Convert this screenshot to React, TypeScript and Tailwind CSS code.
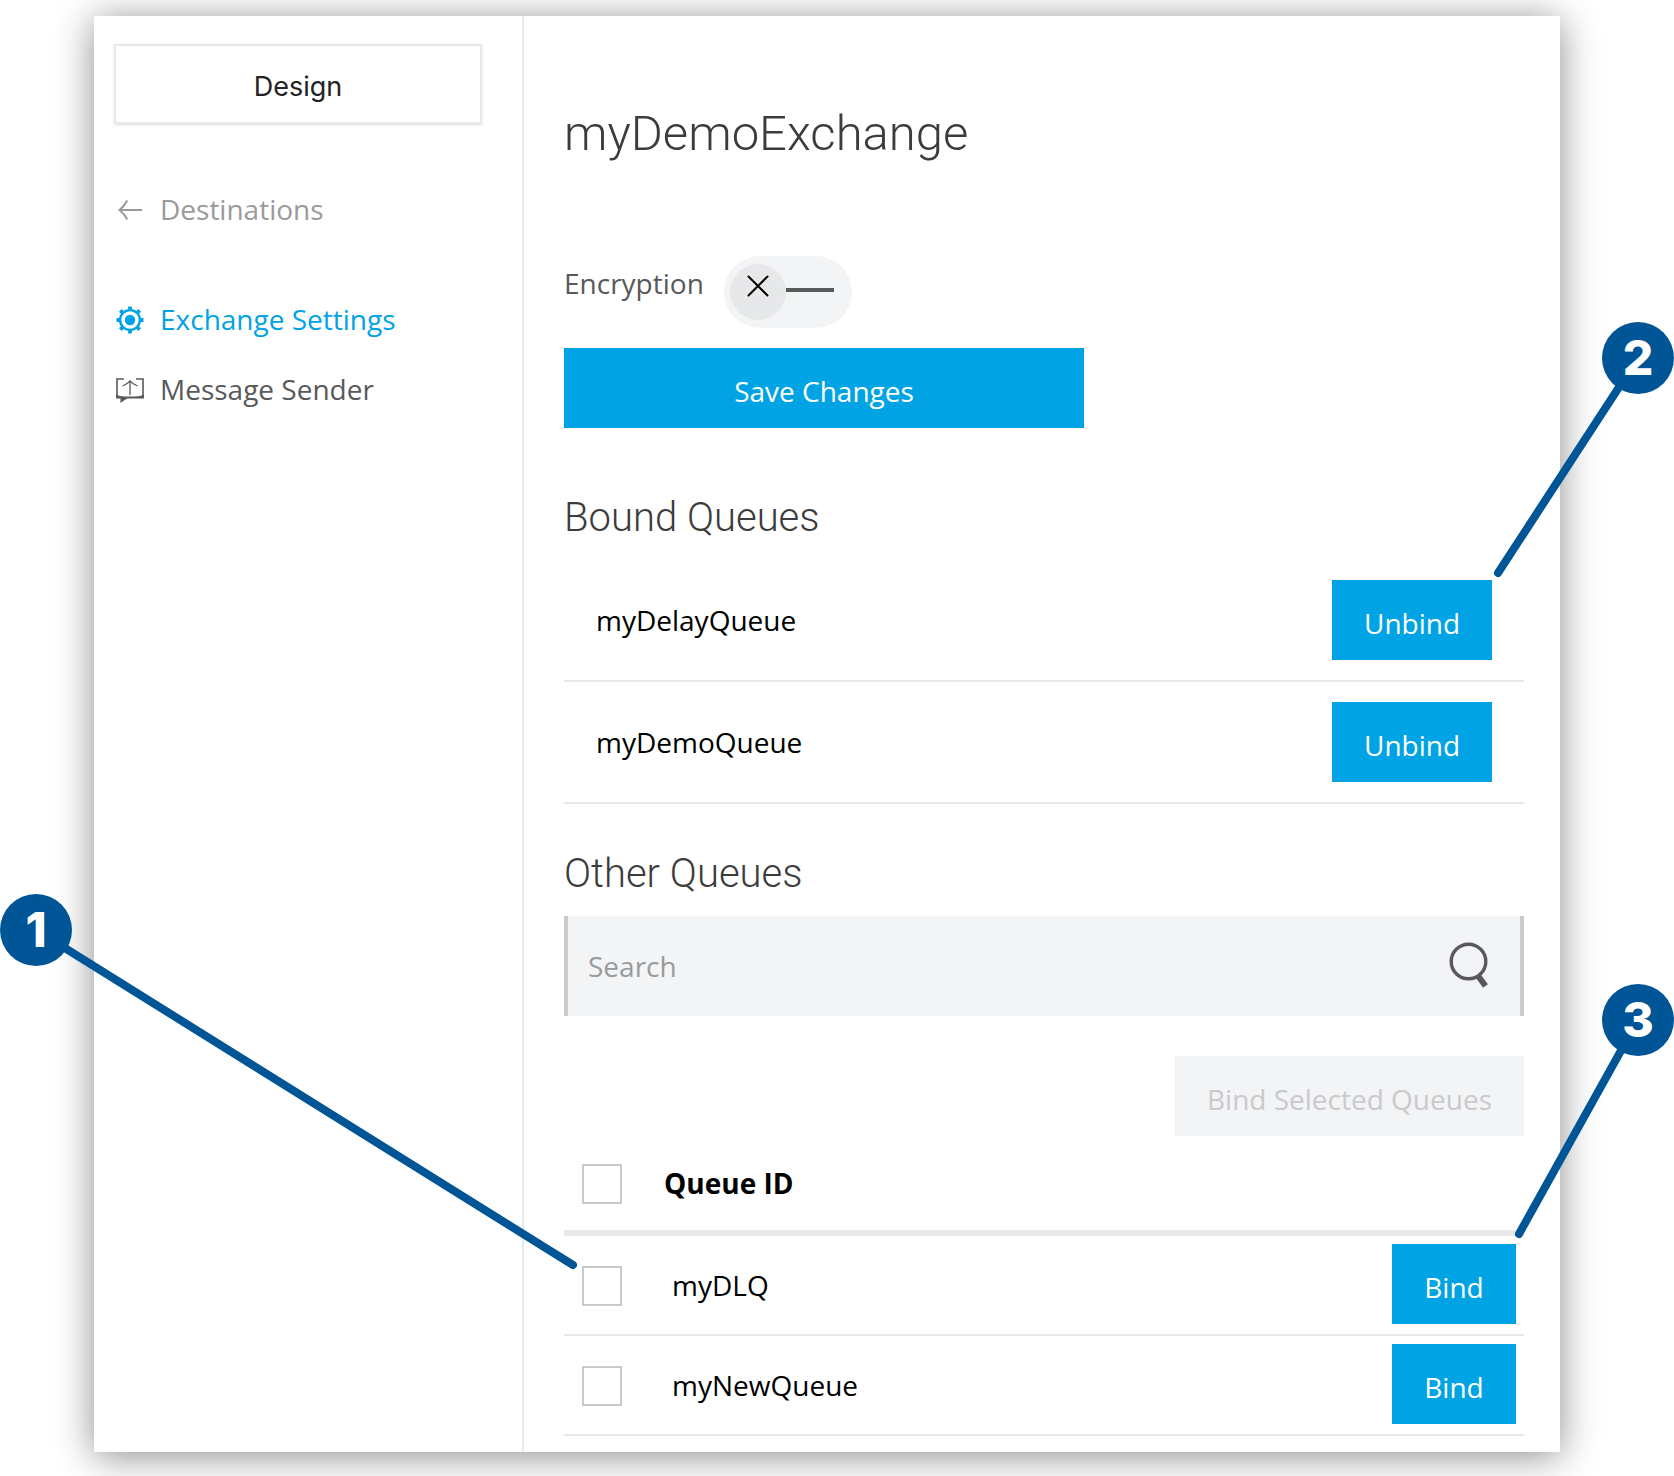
import { useState } from "react";

const primaryButton =
  "h-20 bg-[#00a3e3] px-8 pt-1.5 text-center text-white hover:bg-[#0092cc]";
const checkbox =
  "block size-10 appearance-none border-2 border-[#c9cacc] bg-white checked:bg-[#00a3e3]";

function BackIcon() {
  return (
    <svg viewBox="0 0 28 28" className="size-7 shrink-0" fill="none" stroke="currentColor" strokeWidth="2" aria-hidden="true">
      <path d="M26 15H3.5M11.2 5.5 Q8 11.5 3.5 15 Q8 18.5 11.2 24.5" />
    </svg>
  );
}

function GearIcon() {
  return (
    <svg viewBox="0 0 28 28" className="size-7 shrink-0 overflow-visible" fill="none" stroke="currentColor" aria-hidden="true">
      <g transform="translate(0 1)">
        <circle cx="14" cy="14" r="9.9" strokeWidth="2.4" />
        <circle cx="14" cy="14" r="5.2" fill="currentColor" stroke="none" />
        <path
          d="M14 .5v4M14 23.5v4M.5 14h4M23.5 14h4M4.3 4.3l2.8 2.8M20.9 20.9l2.8 2.8M23.7 4.3l-2.8 2.8M7.1 20.9l-2.8 2.8"
          strokeWidth="3.8"
        />
      </g>
    </svg>
  );
}

function SendIcon() {
  return (
    <svg viewBox="0 0 28 28" className="size-7 shrink-0 overflow-visible" fill="none" stroke="currentColor" aria-hidden="true">
      <g transform="translate(0 1)">
        <path d="M8 3H1v18" strokeWidth="1.6" />
        <path d="M20 3h7v18" strokeWidth="1.6" />
        <path d="M0 18.500L4 20Q14 21 24 20L28 18.500V22.500H11L4.500 27V22.500H0z" fill="currentColor" stroke="none" />
        <path d="M14 19V5M6.500 10Q11.500 8 14 4.800Q16.500 8 21.500 10" strokeWidth="1.300" />
      </g>
    </svg>
  );
}

function SearchIcon() {
  return (
    <svg viewBox="0 0 40 48" className="h-12 w-10" fill="none" stroke="#58595b" aria-hidden="true">
      <circle cx="20.500" cy="19.500" r="17.300" strokeWidth="3.400" />
      <path d="M30.500 34.500L37.500 44" strokeWidth="6" />
    </svg>
  );
}

function Badge({ label, className }: { label: string; className: string }) {
  return (
    <span
      className={`absolute flex size-18 items-center justify-center rounded-full bg-[#005596] font-['Inter',sans-serif] text-5xl font-extrabold text-white ${className}`}
    >
      {label}
    </span>
  );
}

function Leader({ d }: { d: string }) {
  return (
    <svg className="size-full overflow-visible" fill="none" stroke="#005596" strokeWidth="8" strokeLinecap="round" aria-hidden="true">
      <path d={d} />
    </svg>
  );
}

function Callouts() {
  return (
    <>
      <div className="pointer-events-none absolute top-[894px] left-0 h-[375px] w-[577px]">
        <Leader d="M36 36L573 371" />
        <Badge label="1" className="top-0 left-0" />
      </div>
      <div className="pointer-events-none absolute top-[322px] right-0 h-[255px] w-[180px]">
        <Leader d="M144 36L4 251" />
        <Badge label="2" className="top-0 right-0" />
      </div>
      <div className="pointer-events-none absolute top-[984px] right-0 h-[254px] w-[160px]">
        <Leader d="M124 36L5 250" />
        <Badge label="3" className="top-0 right-0" />
      </div>
    </>
  );
}

function Sidebar() {
  return (
    <aside className="w-[430px] shrink-0 border-r-2 border-[#e7e8e9] pt-7 pr-[40px] pl-5">
      <button className="h-20 w-full border-2 border-[#e7e8e9] bg-white pt-1.5 font-['Inter',sans-serif] text-[27px] text-[#232323] shadow-sm">
        Design
      </button>
      <nav className="mt-[65px] flex flex-col pl-0.5 leading-10">
        <a href="#destinations" className="flex items-center gap-4 text-[#999a9c]">
          <BackIcon />
          Destinations
        </a>
        <a href="#settings" className="mt-[70px] flex items-center gap-4 text-[#00a3e3]" aria-current="page">
          <GearIcon />
          Exchange Settings
        </a>
        <a href="#sender" className="mt-[30px] flex items-center gap-4 text-[#58595b]">
          <SendIcon />
          Message Sender
        </a>
      </nav>
    </aside>
  );
}

function EncryptionSwitch() {
  const [on, setOn] = useState(false);
  return (
    <div className="mt-[92px] flex items-start gap-5 text-[#58595b]">
      <label htmlFor="encryption" className="leading-[54px]">
        Encryption
      </label>
      <label
        htmlFor="encryption"
        className={`flex h-18 w-32 items-center rounded-full bg-[#f3f4f6] px-1.5 ${on ? "flex-row-reverse" : ""}`}
      >
        <input
          id="encryption"
          type="checkbox"
          role="switch"
          checked={on}
          onChange={(e) => setOn(e.target.checked)}
          className="sr-only"
        />
        <span className="flex size-14 justify-center rounded-full bg-[#e7e8e9] pt-3">
          <svg viewBox="0 0 20 20" className="size-5 overflow-visible" fill="none" stroke="#000" strokeWidth="2" strokeLinecap="round" aria-hidden="true">
            <path d="M.5 .5L19.500 19.500M19.500 .5L.5 19.500" />
          </svg>
        </span>
        <span className="mb-1 h-1 w-12 bg-[#58595b]" />
      </label>
    </div>
  );
}

function BoundQueues() {
  return (
    <table className="mt-[18px] w-full">
      <tbody>
        {["myDelayQueue", "myDemoQueue"].map((name) => (
          <tr key={name} className="border-b-2 border-[#e7e8e9]">
            <td className="py-5 pl-8">{name}</td>
            <td className="py-5 pr-8">
              <button className={`ml-auto block w-40 ${primaryButton}`}>Unbind</button>
            </td>
          </tr>
        ))}
      </tbody>
    </table>
  );
}

function OtherQueues() {
  return (
    <table className="w-full border-separate border-spacing-0">
      <thead className="[&_th]:border-b-6 [&_th]:border-[#e7e8e9]">
        <tr className="h-[100px]">
          <th className="w-[100px] pt-0.5 pl-[18px]">
            <input type="checkbox" aria-label="Select all queues" className={checkbox} />
          </th>
          <th className="text-left font-bold" colSpan={2}>
            Queue ID
          </th>
        </tr>
      </thead>
      <tbody className="[&_td]:border-b-2 [&_td]:border-[#e7e8e9]">
        {["myDLQ", "myNewQueue"].map((name) => (
          <tr key={name} className="h-[100px]">
            <td className="pt-0.5 pl-[18px]">
              <input type="checkbox" aria-label={`Select ${name}`} className={checkbox} />
            </td>
            <td className="pl-2">{name}</td>
            <td className="pr-2 pb-0.5">
              <button className={`ml-auto block w-[124px] ${primaryButton}`}>Bind</button>
            </td>
          </tr>
        ))}
      </tbody>
    </table>
  );
}

export default function App() {
  return (
    <div className="relative bg-white pt-4 pr-[114px] pb-6 pl-[94px] font-['Open_Sans',sans-serif] text-[28px] leading-10 text-black">
      <div className="flex bg-white shadow-[0_4px_36px_rgba(0,0,0,0.45)]">
        <Sidebar />
        <main className="min-w-0 flex-1 pt-[88px] pr-9 pb-4 pl-10">
          <h1 className="font-['Roboto',sans-serif] text-[49px] leading-[60px] font-light text-[#3c3c3d]">
            myDemoExchange
          </h1>
          <EncryptionSwitch />
          <button className={`mt-5 block w-[520px] max-w-full ${primaryButton}`}>Save Changes</button>

          <h2 className="mt-[66px] font-['Roboto',sans-serif] text-[40px] leading-12 font-light text-[#3c3c3d]">
            Bound Queues
          </h2>
          <BoundQueues />

          <h2 className="mt-[46px] font-['Roboto',sans-serif] text-[40px] leading-12 font-light text-[#3c3c3d]">
            Other Queues
          </h2>
          <div className="mt-[18px] flex h-[100px] items-center border-x-4 border-[#c9cacc] bg-[#f3f4f6] pr-8 pl-5">
            <input
              type="search"
              aria-label="Search queues"
              placeholder="Search"
              className="min-w-0 flex-1 bg-transparent outline-none placeholder:text-[#999a9c]"
            />
            <button aria-label="Search">
              <SearchIcon />
            </button>
          </div>
          <button disabled className="mt-10 ml-auto block h-20 bg-[#f3f4f6] px-8 pt-1.5 text-[#c9cacc]">
            Bind Selected Queues
          </button>
          <OtherQueues />
        </main>
      </div>
      <Callouts />
    </div>
  );
}
